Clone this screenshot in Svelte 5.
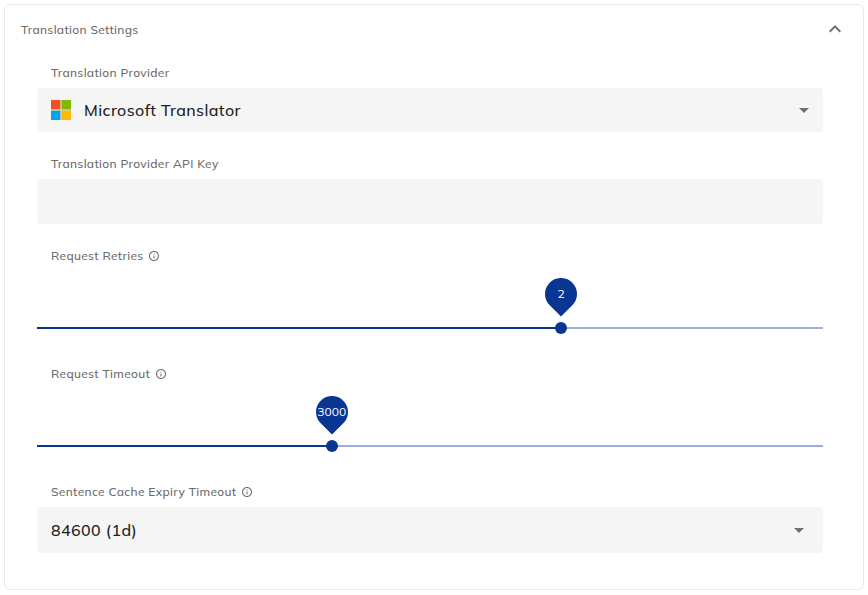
<script>
  const sliders = [
    { label: 'Request Retries', value: 2, percent: 66.67 },
    { label: 'Request Timeout', value: 3000, percent: 37.5 }
  ];
</script>

{#snippet info()}
  <svg class="info" viewBox="0 0 24 24" aria-hidden="true">
    <path d="M11 7h2v2h-2zm0 4h2v6h-2zm1-9C6.48 2 2 6.48 2 12s4.48 10 10 10 10-4.48 10-10S17.52 2 12 2zm0 18c-4.41 0-8-3.59-8-8s3.59-8 8-8 8 3.59 8 8-3.59 8-8 8z" />
  </svg>
{/snippet}

{#snippet arrow()}
  <svg class="arrow" viewBox="0 0 24 24" aria-hidden="true"><path d="M7 10l5 5 5-5z" /></svg>
{/snippet}

<section class="card">
  <header>
    <span class="title">Translation Settings</span>
    <svg class="chevron" viewBox="0 0 24 24" aria-hidden="true">
      <path d="M12 8l-6 6 1.41 1.41L12 10.83l4.59 4.58L18 14z" />
    </svg>
  </header>
  <div class="body">
    <div class="field">
      <div class="label"><span>Translation Provider</span></div>
      <div class="box provider">
        <svg class="logo" viewBox="0 0 20 20" aria-hidden="true">
          <path fill="#d9d3b4" d="M0 0h20v20H0z" />
          <path fill="#f25022" d="M0 0h9.3v9.3H0z" />
          <path fill="#7fba00" d="M10.7 0H20v9.3h-9.3z" />
          <path fill="#00a4ef" d="M0 10.7h9.3V20H0z" />
          <path fill="#ffb900" d="M10.7 10.7H20V20h-9.3z" />
        </svg>
        <span class="value">Microsoft Translator</span>
        {@render arrow()}
      </div>
    </div>
    <div class="field">
      <div class="label"><span>Translation Provider API Key</span></div>
      <input class="box key" type="text" aria-label="Translation Provider API Key" />
    </div>
    {#each sliders as slider}
      <div class="field range">
        <div class="label"><span>{slider.label}</span>{@render info()}</div>
        <div class="slider">
          <div class="track"><div class="fill" style="width: {slider.percent}%"></div></div>
          <div class="handle" style="left: {slider.percent}%">
            <svg class="pin" viewBox="0 0 32 39" aria-hidden="true">
              <path d="M16 38.6L4.7 27.3A16 16 0 1 1 27.3 27.3z" />
            </svg>
            <span class="number">{slider.value}</span>
            <i class="dot"></i>
          </div>
        </div>
      </div>
    {/each}
    <div class="field">
      <div class="label"><span>Sentence Cache Expiry Timeout</span>{@render info()}</div>
      <div class="box expiry">
        <span class="value">84600 (1d)</span>
        {@render arrow()}
      </div>
    </div>
  </div>
</section>

<style>
  :global(body) { background: #fff; }
  :global(#app) { display: flow-root; }
  .card {
    box-sizing: border-box;
    width: 860px;
    height: 586px;
    margin: 4px;
    border: 1px solid #e8e8e8;
    border-radius: 6px;
    font-family: Muli, Mulish, "Open Sans", sans-serif;
    font-size: 12px;
    font-weight: 500;
    letter-spacing: 0.32px;
    color: #6b6b6b;
  }
  header {
    display: flex;
    align-items: center;
    justify-content: space-between;
    height: 48px;
    padding: 0 16px;
  }
  .chevron { width: 24px; height: 24px; fill: #6f6f6f; }
  .body { padding: 5px 40px 0 32px; }
  .field { margin-bottom: 17px; }
  .label {
    box-sizing: border-box;
    display: flex;
    align-items: center;
    height: 30px;
    padding: 0 0 2px 14px;
    white-space: nowrap;
  }
  .info { width: 12px; height: 12px; margin-left: 4.5px; margin-top: 2px; fill: #6b6b6b; }
  .box {
    box-sizing: border-box;
    display: flex;
    align-items: center;
    width: 100%;
    padding: 0 7px 0 14px;
    border: 0;
    border-radius: 4px;
    background: #f5f5f5;
  }
  .provider { height: 44px; }
  .key { height: 45px; outline: 0; }
  .expiry { height: 46px; padding-right: 12px; }
  .logo { width: 20px; height: 20px; margin-right: 13px; }
  .value { font-size: 16px; letter-spacing: 0.42px; color: #212121; }
  .arrow { width: 24px; height: 24px; margin-left: auto; fill: #707070; }
  .range { margin-bottom: 18px; }
  .slider { position: relative; height: 70px; padding-top: 56px; box-sizing: border-box; }
  .track { height: 2px; background: #9daed6; }
  .fill { height: 2px; background: #0a3693; }
  .handle { position: absolute; top: 7px; width: 32px; height: 56px; margin-left: -16px; }
  .pin { display: block; width: 32px; height: 39px; fill: #0a3693; }
  .number {
    position: absolute;
    top: 0;
    left: 0;
    width: 32px;
    line-height: 32px;
    text-align: center;
    color: #fff;
    font-weight: 400;
    letter-spacing: 0;
  }
  .dot {
    position: absolute;
    left: 10px;
    top: 44px;
    width: 12px;
    height: 12px;
    border-radius: 50%;
    background: #0a3693;
  }
</style>
